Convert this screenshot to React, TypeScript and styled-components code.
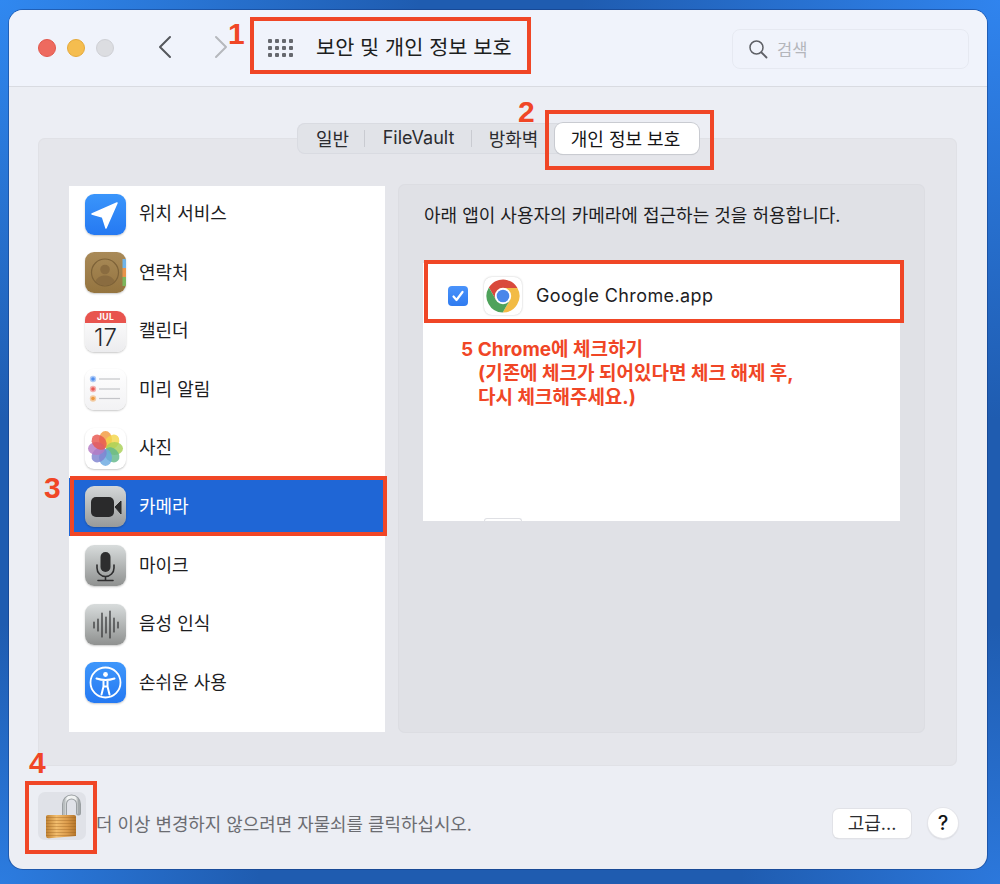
import styled, { createGlobalStyle } from 'styled-components'
import { ReactNode } from 'react'

const RED = '#f04626'
const FONT = `Inter, "Noto Sans CJK KR", sans-serif`

const GlobalStyle = createGlobalStyle`
  html, body {
    margin: 0;
    padding: 0;
  }
  body {
    font-family: ${FONT};
    font-size: 18px;
    color: #1d1d1f;
  }
`

const Desktop = styled.div`
  width: 1000px;
  height: 884px;
  padding: 10px 13px 15px 9px;
  box-sizing: border-box;
  overflow: hidden;
  background:
    radial-gradient(circle at 0 0, #3088f0 0, rgba(48, 136, 240, 0) 420px),
    radial-gradient(circle at 1000px 0, #3084ee 0, rgba(48, 132, 238, 0) 420px),
    radial-gradient(circle at 1000px 884px, #2c78dc 0, rgba(44, 120, 220, 0) 260px),
    radial-gradient(circle at 0 884px, #2c7ce0 0, rgba(44, 124, 224, 0) 260px),
    #1f5cb0;
`

const Window = styled.div`
  position: relative;
  width: 978px;
  height: 859px;
  border-radius: 14px;
  background: #eceef4;
  box-shadow: 0 0 0 1px rgba(16, 50, 120, 0.45);
  overflow: hidden;
`

const TitleBar = styled.header`
  display: flex;
  align-items: center;
  height: 77px;
  padding: 0 18px 0 29px;
  box-sizing: border-box;
  background: #f0f3fb;
  border-bottom: 1px solid #d9dbe1;
`

const Lights = styled.div`
  display: flex;
  gap: 11px;
  margin-top: -1px;
`

const Light = styled.span<{ $color: string; $edge: string }>`
  width: 18px;
  height: 18px;
  border-radius: 50%;
  box-sizing: border-box;
  background: ${(p) => p.$color};
  border: 1px solid ${(p) => p.$edge};
`

const NavIcon = styled.svg<{ $gap: number }>`
  margin-left: ${(p) => p.$gap}px;
  margin-top: -2px;
  flex: none;
`

const AppsGrid = styled.div`
  display: grid;
  grid-template-columns: repeat(4, 4px);
  grid-auto-rows: 4px;
  gap: 3px;
  margin-left: 40px;
  margin-top: -1px;
`

const AppsDot = styled.span`
  border-radius: 1px;
  background: #66686e;
`

const Title = styled.h1`
  margin: -5px 0 0 23px;
  font-size: 20.8px;
  font-weight: 400;
  color: #1d1e20;
  white-space: nowrap;
`

const SearchBox = styled.div`
  display: flex;
  align-items: center;
  gap: 9px;
  width: 237px;
  height: 40px;
  margin-left: auto;
  margin-top: 1px;
  padding-left: 15px;
  box-sizing: border-box;
  border: 1px solid #e6e9f1;
  border-radius: 8px;
  color: #b4b6bb;
  font-size: 16.5px;
`

const Tabs = styled.nav`
  display: flex;
  align-items: center;
  position: relative;
  z-index: 1;
  width: 402px;
  height: 31px;
  margin: 36px auto 0;
  border-radius: 8px;
  background: #e1e3e8;
  box-shadow: inset 0 0 0 1px #d9dbe1;
`

const TabLabel = styled.span<{ $nudge: number }>`
  margin: -2px 0 0 ${(p) => p.$nudge}px;
`

const Tab = styled.div<{ $width: number; $active?: boolean; $divider?: boolean }>`
  display: flex;
  align-items: center;
  justify-content: center;
  width: ${(p) => p.$width}px;
  height: 31px;
  flex: none;
  box-sizing: border-box;
  white-space: nowrap;
  color: ${(p) => (p.$active ? '#141416' : '#2b2c2f')};
  background: ${(p) => (p.$active ? '#ffffff' : 'transparent')};
  border-radius: ${(p) => (p.$active ? '8px' : '0')};
  box-shadow: ${(p) => (p.$active ? '0 0 0 1px #c9cbd1, 0 1px 1px rgba(0, 0, 0, 0.15)' : 'none')};
  position: relative;
  &::after {
    content: '';
    display: ${(p) => (p.$divider ? 'block' : 'none')};
    position: absolute;
    right: 0;
    top: 7px;
    bottom: 7px;
    width: 1px;
    background: #c9cbd1;
  }
`

const Panel = styled.section`
  display: grid;
  grid-template-columns: 316px 527px;
  gap: 13px;
  align-items: start;
  width: 919px;
  height: 628px;
  margin: -16px 0 0 29px;
  padding: 46px 0 0 31px;
  box-sizing: border-box;
  border-radius: 7px;
  background: #e5e6eb;
  box-shadow: inset 0 0 0 1px #e0e1e6;
`

const List = styled.div`
  height: 546px;
  margin-top: 2px;
  background: #ffffff;
  overflow: hidden;
`

const ListInner = styled.div`
  margin-top: -1.3px;
`

const Row = styled.div<{ $selected?: boolean }>`
  display: flex;
  align-items: center;
  gap: 13px;
  height: 58.6px;
  padding-left: 16px;
  box-sizing: border-box;
  background: ${(p) => (p.$selected ? '#1f66d6' : 'transparent')};
  color: ${(p) => (p.$selected ? '#ffffff' : '#1d1d1f')};
`

const RowLabel = styled.span`
  margin-top: -4px;
  white-space: nowrap;
`

const Tile = styled.div<{ $bg: string }>`
  position: relative;
  width: 41px;
  height: 41px;
  flex: none;
  border-radius: 9px;
  overflow: hidden;
  background: ${(p) => p.$bg};
  box-shadow: 0 1px 2px rgba(0, 0, 0, 0.22);
  svg {
    display: block;
  }
`

const CalTop = styled.div`
  height: 12px;
  background: #e8544e;
  color: #ffffff;
  font-size: 8.5px;
  font-weight: 700;
  line-height: 12px;
  text-align: center;
  letter-spacing: 0.4px;
`

const CalDay = styled.div`
  height: 29px;
  color: #2a2a2c;
  font-size: 24px;
  font-weight: 300;
  line-height: 29px;
  text-align: center;
`

const Pane = styled.div`
  height: 549px;
  padding: 20px 25px 0 26px;
  box-sizing: border-box;
  border-radius: 7px;
  background: #e0e1e6;
  box-shadow: inset 0 0 0 1px #dcdde2;
`

const PaneText = styled.p`
  margin: 0;
  height: 26px;
  line-height: 24px;
  white-space: nowrap;
  color: #1d1d1f;
`

const AppBox = styled.div`
  position: relative;
  width: 477px;
  height: 258px;
  margin: 33px 0 0 -1px;
  padding-top: 14px;
  box-sizing: border-box;
  background: #ffffff;
`

const AppRow = styled.div`
  display: flex;
  align-items: center;
  padding-left: 25px;
`

const Check = styled.div`
  display: flex;
  align-items: center;
  justify-content: center;
  width: 20px;
  height: 20px;
  border-radius: 4px;
  background: linear-gradient(#4a93fb, #2f7bf0);
`

const ChromeTile = styled.div`
  width: 38px;
  height: 38px;
  margin-left: 16px;
  border-radius: 8px;
  background: #ffffff;
  box-shadow: 0 0 2px rgba(0, 0, 0, 0.25);
  svg {
    display: block;
  }
`

const AppName = styled.span`
  margin: -2px 0 0 14px;
  font-size: 18px;
  letter-spacing: 0.4px;
  color: #1d1d1f;
`

const Note = styled.div`
  margin: 23px 0 0 38px;
  color: ${RED};
  font-family: Inter, 'Noto Sans CJK KR', sans-serif;
  font-size: 19px;
  font-weight: 700;
  line-height: 24px;
`

const NoteIndent = styled.div`
  padding-left: 17px;
  white-space: nowrap;
`

const NextTileEdge = styled.div`
  position: absolute;
  left: 61px;
  bottom: 0;
  width: 38px;
  height: 3px;
  box-sizing: border-box;
  border: 1px solid #dfe0e4;
  border-bottom: 0;
  border-radius: 5px 5px 0 0;
`

const Footer = styled.footer`
  display: flex;
  align-items: flex-end;
  height: 74px;
  padding: 26px 29px 0;
  box-sizing: border-box;
`

const LockTile = styled.div`
  width: 48px;
  height: 48px;
  flex: none;
  border-radius: 7px;
  background: #e0e2e8;
`

const FooterText = styled.span`
  margin: 0 0 -2px 10px;
  line-height: 34px;
  font-size: 17.9px;
  color: #6b6c71;
  white-space: nowrap;
`

const MoreButton = styled.div`
  display: flex;
  align-items: center;
  justify-content: center;
  width: 78px;
  height: 29px;
  margin: 0 17px 2px auto;
  padding-bottom: 3px;
  box-sizing: border-box;
  border-radius: 6px;
  background: #ffffff;
  box-shadow: 0 0 0 1px #e1e2e7, 0 1px 1px rgba(0, 0, 0, 0.18);
  color: #2b2c2f;
`

const HelpButton = styled.div`
  display: flex;
  align-items: center;
  justify-content: center;
  width: 30px;
  height: 30px;
  margin-bottom: 2px;
  border-radius: 50%;
  background: #ffffff;
  box-shadow: 0 0 0 1px #e4e5ea, 0 1px 2px rgba(0, 0, 0, 0.2);
  color: #141416;
  font-size: 20px;
  font-weight: 500;
`

// red annotations drawn over the screenshot
const Callout = styled.div<{ $x: number; $y: number; $w: number; $h: number }>`
  position: absolute;
  left: ${(p) => p.$x}px;
  top: ${(p) => p.$y}px;
  width: ${(p) => p.$w}px;
  height: ${(p) => p.$h}px;
  box-sizing: border-box;
  border: 4.5px solid ${RED};
  z-index: 5;
`

const StepNumber = styled.span<{ $x: number; $y: number }>`
  position: absolute;
  left: ${(p) => p.$x}px;
  top: ${(p) => p.$y}px;
  z-index: 5;
  color: ${RED};
  font-family: 'Liberation Sans', sans-serif;
  font-size: 30px;
  font-weight: 700;
  line-height: 30px;
`

const Glyph = ({ children }: { children: ReactNode }) => (
  <svg width={41} height={41} viewBox="0 0 41 41" fill="none">
    {children}
  </svg>
)

const petals = [
  '#f39a3e',
  '#f3d64a',
  '#a8cf55',
  '#63b88a',
  '#6aa8e0',
  '#7f82d0',
  '#b57ac4',
  '#e8574f',
]

const rows: { label: string; bg: string; icon: ReactNode; selected?: boolean }[] = [
  {
    label: '위치 서비스',
    bg: 'linear-gradient(#3a95fb, #2579f2)',
    icon: (
      <Glyph>
        <path d="M32 9 7 20l10.5 3L21 34z" fill="#fff" stroke="#fff" strokeWidth="1.5" strokeLinejoin="round" />
      </Glyph>
    ),
  },
  {
    label: '연락처',
    bg: 'linear-gradient(#a98a58, #94743f)',
    icon: (
      <Glyph>
        <rect x="37.5" y="7" width="3.5" height="9" fill="#6fb3e8" />
        <rect x="37.5" y="16" width="3.5" height="9" fill="#e8934a" />
        <rect x="37.5" y="25" width="3.5" height="9" fill="#7cb65c" />
        <circle cx="20" cy="20.5" r="13.5" stroke="#7d6238" strokeWidth="1.2" />
        <circle cx="20" cy="17.5" r="4.8" fill="#8a6c40" />
        <path d="M10.5 29c2-4 5.500-5.500 9.500-5.500s7.500 1.500 9.500 5.500c-2.500 3-5.800 4.500-9.500 4.500s-7-1.500-9.500-4.500z" fill="#8a6c40" />
      </Glyph>
    ),
  },
  {
    label: '캘린더',
    bg: 'linear-gradient(#ffffff, #ececee)',
    icon: (
      <>
        <CalTop>JUL</CalTop>
        <CalDay>17</CalDay>
      </>
    ),
  },
  {
    label: '미리 알림',
    bg: 'linear-gradient(#ffffff, #f2f2f4)',
    icon: (
      <Glyph>
        {[
          ['#4f8ff0', 10],
          ['#ea5a55', 20],
          ['#ee9a3e', 29.5],
        ].map(([color, y]) => (
          <g key={color}>
            <circle cx="8" cy={y} r="3.2" fill={color as string} opacity="0.45" />
            <circle cx="8" cy={y} r="1.8" fill={color as string} />
            <rect x="14" y={(y as number) - 0.6} width="21" height="1.2" fill="#c4c5c9" />
          </g>
        ))}
      </Glyph>
    ),
  },
  {
    label: '사진',
    bg: '#ffffff',
    icon: (
      <Glyph>
        {petals.map((color, i) => (
          <ellipse
            key={color}
            cx="20.5"
            cy="11.5"
            rx="6.5"
            ry="8.5"
            fill={color}
            opacity="0.82"
            transform={`rotate(${i * 45} 20.5 20.5)`}
          />
        ))}
      </Glyph>
    ),
  },
  {
    label: '카메라',
    selected: true,
    bg: 'linear-gradient(#d4d7d8, #989a9a)',
    icon: (
      <Glyph>
        <rect x="6" y="11" width="23" height="20" rx="5" fill="#2a2a2b" />
        <path d="M30 21 36 15v13z" fill="#2a2a2b" stroke="#2a2a2b" strokeLinejoin="round" />
      </Glyph>
    ),
  },
  {
    label: '마이크',
    bg: 'linear-gradient(#d8dcdc, #8f9190)',
    icon: (
      <Glyph>
        <rect x="15.5" y="7" width="10" height="20" rx="5" fill="#2e2e2f" />
        <path d="M12 20v3a8.500 8.500 0 0 0 17 0v-3M20.500 32v3M13 35.500h15" stroke="#2e2e2f" strokeWidth="1.6" strokeLinecap="round" />
      </Glyph>
    ),
  },
  {
    label: '음성 인식',
    bg: 'linear-gradient(#d8dcdc, #8f9190)',
    icon: (
      <Glyph>
        <path
          d="M9 18v6M13 15v12M17 9v24M21 13v16M25 7v27M29 14v14M33 18v6"
          stroke="#2e2e2f"
          strokeWidth="1.2"
          strokeLinecap="round"
        />
      </Glyph>
    ),
  },
  {
    label: '손쉬운 사용',
    bg: 'linear-gradient(#3f97fb, #2579f2)',
    icon: (
      <Glyph>
        <circle cx="20.5" cy="20.5" r="15" stroke="#fff" strokeWidth="1.8" />
        <circle cx="20.5" cy="12.5" r="2.4" fill="#fff" />
        <path
          d="M11.500 16.500c3 1 6 1.500 9 1.500s6-.5 9-1.500M18.500 18.500v6l-2 8M22.500 18.500v6l2 8M18.500 24.500h4"
          stroke="#fff"
          strokeWidth="2"
          strokeLinecap="round"
          strokeLinejoin="round"
        />
      </Glyph>
    ),
  },
]

const tabs = [
  { label: '일반', width: 68, nudge: 3, divider: true },
  { label: 'FileVault', width: 107, nudge: 0, divider: true },
  { label: '방화벽', width: 83, nudge: 0 },
  { label: '개인 정보 보호', width: 144, nudge: -3, active: true },
]

const ChromeIcon = () => (
  <svg width="38" height="38" viewBox="0 0 38 38">
    <path d="M19 11h14.430A16.500 16.500 0 0 0 4.860 10.500L12.070 23 19 19z" fill="#d9493c" />
    <path d="M33.430 11A16.500 16.500 0 0 1 18.710 35.500L25.930 23 19 19 19 11z" fill="#f2bb45" />
    <path d="M4.860 10.500A16.500 16.500 0 0 0 18.710 35.500L25.930 23 19 19 12.070 23z" fill="#4ea25a" />
    <circle cx="19" cy="19" r="8.2" fill="#ffffff" />
    <circle cx="19" cy="19" r="6.3" fill="#4a87ea" />
  </svg>
)

const LockIcon = () => (
  <svg width="48" height="48" viewBox="0 0 48 48" fill="none">
    <defs>
      <linearGradient id="shackle" x1="0" y1="0" x2="1" y2="0">
        <stop offset="0" stopColor="#b9bec0" />
        <stop offset="0.2" stopColor="#f4f6f6" />
        <stop offset="0.8" stopColor="#eef0f0" />
        <stop offset="1" stopColor="#a4a9ab" />
      </linearGradient>
      <linearGradient id="gold" x1="0" y1="0" x2="1" y2="0">
        <stop offset="0" stopColor="#c08233" />
        <stop offset="0.35" stopColor="#f2bd6d" />
        <stop offset="0.7" stopColor="#dc9c4c" />
        <stop offset="1" stopColor="#b4752a" />
      </linearGradient>
    </defs>
    <path d="M26.500 25V12a7 7 0 0 1 14 0v9" stroke="#9a9fa2" strokeWidth="5" strokeLinecap="round" />
    <path d="M26.500 25V12a7 7 0 0 1 14 0v9" stroke="url(#shackle)" strokeWidth="3" strokeLinecap="round" />
    <path d="M8 24.500Q8 23 10 23h26q2 0 2 1.500V44l-27 2.200q-3 .3-3-2.200z" fill="url(#gold)" />
    {[25.5, 28.5, 31.5, 34.5, 37.5, 40.5, 43.5].map((y) => (
      <path key={y} d={`M8 ${y}h30`} stroke="#96601f" strokeOpacity="0.45" strokeWidth="0.8" />
    ))}
  </svg>
)

export default function App() {
  return (
    <>
      <GlobalStyle />
      <Desktop>
        <Window>
          <TitleBar>
            <Lights>
              <Light $color="#ee6a5f" $edge="#e2574c" />
              <Light $color="#f5bd4f" $edge="#e5a93a" />
              <Light $color="#dcdde1" $edge="#cfd0d5" />
            </Lights>
            <NavIcon $gap={44} width="14" height="24" viewBox="0 0 14 24" fill="none">
              <path d="M12 2 2 12l10 10" stroke="#55575c" strokeWidth="2" strokeLinecap="round" strokeLinejoin="round" />
            </NavIcon>
            <NavIcon $gap={42} width="14" height="24" viewBox="0 0 14 24" fill="none">
              <path d="m2 2 10 10L2 22" stroke="#b6b8bd" strokeWidth="2" strokeLinecap="round" strokeLinejoin="round" />
            </NavIcon>
            <AppsGrid>
              {Array.from({ length: 12 }, (_, i) => (
                <AppsDot key={i} />
              ))}
            </AppsGrid>
            <Title>보안 및 개인 정보 보호</Title>
            <SearchBox>
              <svg width="20" height="20" viewBox="0 0 20 20" fill="none">
                <circle cx="8.5" cy="8.5" r="6.5" stroke="#5e6066" strokeWidth="1.5" />
                <path d="m13.500 13.500 5 5" stroke="#5e6066" strokeWidth="1.8" strokeLinecap="round" />
              </svg>
              검색
            </SearchBox>
          </TitleBar>

          <Tabs>
            {tabs.map((tab) => (
              <Tab key={tab.label} $width={tab.width} $active={tab.active} $divider={tab.divider}>
                <TabLabel $nudge={tab.nudge}>{tab.label}</TabLabel>
              </Tab>
            ))}
          </Tabs>

          <Panel>
            <List>
              <ListInner>
                {rows.map((row) => (
                  <Row key={row.label} $selected={row.selected}>
                    <Tile $bg={row.bg}>{row.icon}</Tile>
                    <RowLabel>{row.label}</RowLabel>
                  </Row>
                ))}
              </ListInner>
            </List>
            <Pane>
              <PaneText>아래 앱이 사용자의 카메라에 접근하는 것을 허용합니다.</PaneText>
              <AppBox>
                <AppRow>
                  <Check>
                    <svg width="14" height="14" viewBox="0 0 14 14" fill="none">
                      <path d="m2.500 7.500 3 3.500 6-8" stroke="#fff" strokeWidth="2.2" strokeLinecap="round" strokeLinejoin="round" />
                    </svg>
                  </Check>
                  <ChromeTile>
                    <ChromeIcon />
                  </ChromeTile>
                  <AppName>Google Chrome.app</AppName>
                </AppRow>
                <Note>
                  5 Chrome에 체크하기
                  <NoteIndent>(기존에 체크가 되어있다면 체크 해제 후,</NoteIndent>
                  <NoteIndent>다시 체크해주세요.)</NoteIndent>
                </Note>
                <NextTileEdge />
              </AppBox>
            </Pane>
          </Panel>

          <Footer>
            <LockTile>
              <LockIcon />
            </LockTile>
            <FooterText>더 이상 변경하지 않으려면 자물쇠를 클릭하십시오.</FooterText>
            <MoreButton>고급...</MoreButton>
            <HelpButton>?</HelpButton>
          </Footer>

          <Callout $x={241} $y={7} $w={281} $h={57} />
          <Callout $x={536} $y={100} $w={169} $h={60} />
          <Callout $x={61} $y={466} $w={317} $h={60} />
          <Callout $x={16} $y={771} $w={72} $h={73} />
          <Callout $x={415} $y={250} $w={480} $h={63} />
          <StepNumber $x={219} $y={9}>1</StepNumber>
          <StepNumber $x={509} $y={87}>2</StepNumber>
          <StepNumber $x={35} $y={463}>3</StepNumber>
          <StepNumber $x={20} $y={738}>4</StepNumber>
        </Window>
      </Desktop>
    </>
  )
}
